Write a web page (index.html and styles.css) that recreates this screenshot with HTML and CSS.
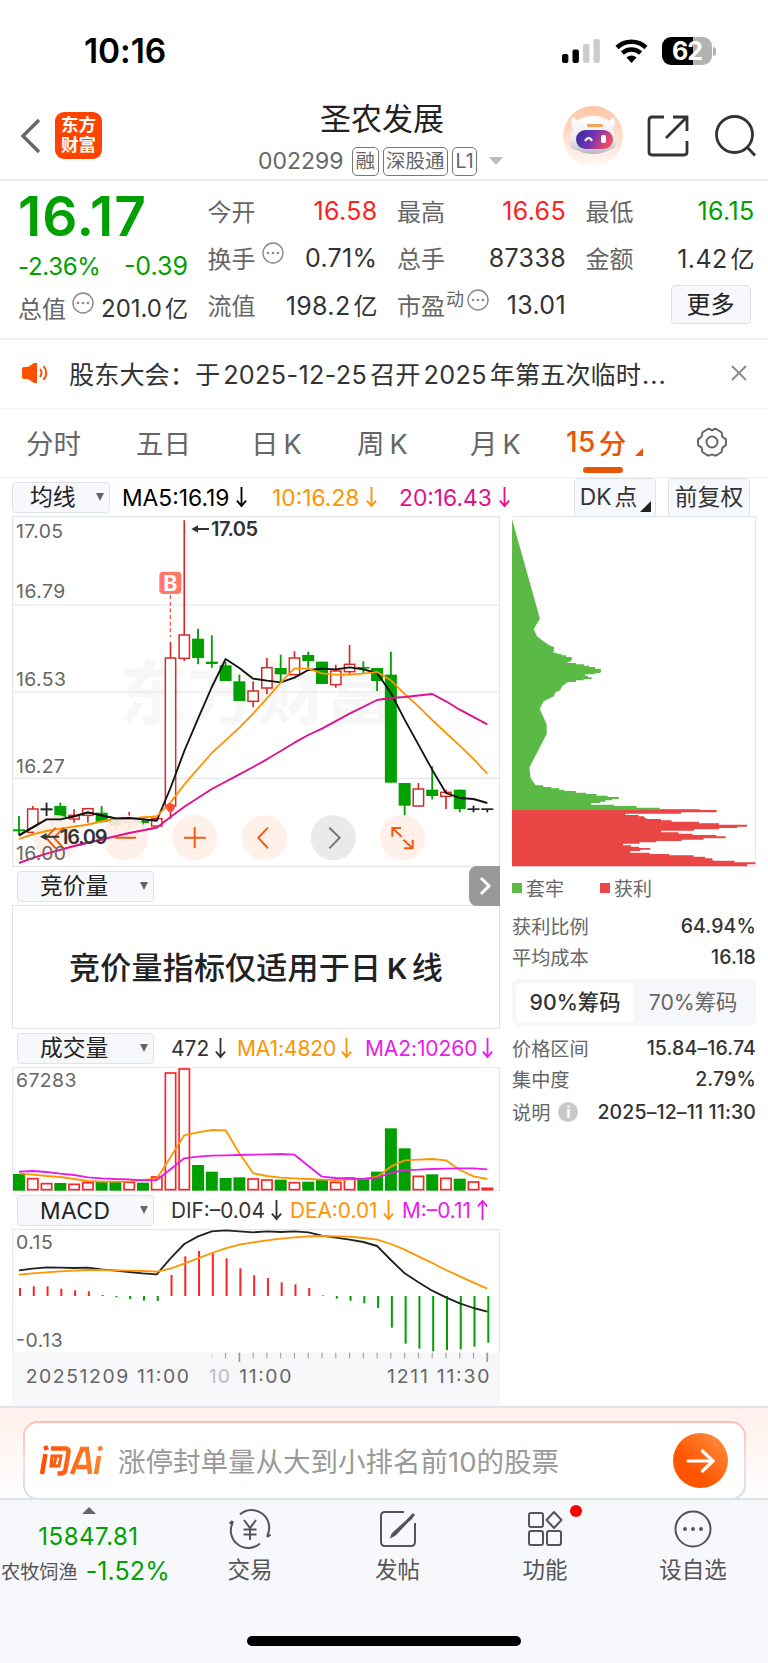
FILE: index.html
```html
<!DOCTYPE html>
<html lang="zh-CN">
<head>
<meta charset="utf-8">
<title>圣农发展 002299</title>
<link rel="stylesheet" href="styles.css">
</head>
<body>
<div class="phone">
  <div class="status">
    <span class="clock">10:16</span>
    <svg class="signal" width="38" height="24" viewBox="0 0 38 24"><rect x="0" y="15" width="6.4" height="9" rx="2"/><rect x="10.5" y="10.500" width="6.400" height="13.500" rx="2"/><g fill="#ccc"><rect x="21" y="5" width="6.400" height="19" rx="2"/><rect x="31.500" y="0" width="6.400" height="24" rx="2"/></g></svg>
    <svg class="wifi" width="33" height="24" viewBox="0 0 33 24"><path d="M16.500 24l-5-5.500a7.500 7.500 0 0 1 10 0z"/><path d="M2 8.500a21 21 0 0 1 29 0M7.300 14a13.500 13.500 0 0 1 18.400 0" fill="none" stroke="#000" stroke-width="4.500"/></svg>
    <div class="battery"><span>62</span></div><i class="nub"></i>
  </div>

  <header class="header">
    <svg class="back" width="22" height="36" viewBox="0 0 22 36"><path d="M19 2L3 18l16 16" fill="none" stroke="#666" stroke-width="3.400"/></svg>
    <div class="logo">东方<br>财富</div>
    <div class="title">
      <div class="name">圣农发展</div>
      <div class="code"><span>002299</span><b>融</b><b>深股通</b><b>L1</b><i></i></div>
    </div>
    <svg class="robot" width="60" height="60" viewBox="0 0 60 60">
      <defs><linearGradient id="ra" x1="0" y1="0" x2="0" y2="1"><stop offset="0" stop-color="#ffc5a6"/><stop offset="1" stop-color="#fff8f4"/></linearGradient>
      <linearGradient id="rb" x1="0" y1="0" x2="1" y2="0.300"><stop offset="0" stop-color="#2d2b9d"/><stop offset=".5" stop-color="#6d33b5"/><stop offset="1" stop-color="#f04a68"/></linearGradient>
      <linearGradient id="rc" x1="0" y1="0" x2="0" y2="1"><stop offset="0" stop-color="#fff"/><stop offset=".6" stop-color="#ececf0"/><stop offset="1" stop-color="#b9b9c4"/></linearGradient></defs>
      <circle cx="30" cy="30" r="30" fill="url(#ra)"/>
      <path d="M9 11q3 1 5 4 6-5 16-5t16 5q2-3 5-4 2 7-1 12 2 4 2 8 3 5 0 10-3 3-6 3-6 4-16 4t-16-4q-4 0-6-3-3-5 0-10 0-4 2-8-3-5-1-12z" fill="url(#rc)"/>
      <rect x="13" y="24" width="37" height="19" rx="9.500" fill="url(#rb)"/><path d="M22 35q4-6 7 0" fill="none" stroke="#fff" stroke-width="2.200"/><rect x="38" y="29" width="5" height="8" rx="2" fill="#fff"/><rect x="24" y="18" width="16" height="3" rx="1" fill="#f6a455"/>
    </svg>
    <svg class="share" width="42" height="42" viewBox="0 0 42 42" fill="none" stroke="#333" stroke-width="2.800"><path d="M17 2H5Q2 2 2 5v32q0 3 3 3h32q3 0 3-3V26M26 2h14v14M40 2L19 23"/></svg>
    <svg class="search" width="42" height="42" viewBox="0 0 42 42" fill="none" stroke="#333" stroke-width="2.800"><circle cx="19.500" cy="19.500" r="18"/><path d="M32 32l8 8.500"/></svg>
  </header>

  <section class="quote">
    <div class="price">
      <div class="last">16.17</div>
      <div class="chg"><span>-2.36%</span><span>-0.39</span></div>
      <div class="cap"><label>总值</label><svg class="dots" viewBox="0 0 22 22"><use href="#dots"/></svg><span>201.0<u>亿</u></span></div>
    </div>
    <div class="cell"><label>今开</label><span class="up">16.58</span></div>
    <div class="cell"><label>最高</label><span class="up">16.65</span></div>
    <div class="cell"><label>最低</label><span class="down">16.15</span></div>
    <div class="cell"><label>换手</label><svg class="dots" viewBox="0 0 22 22"><g id="dots"><circle cx="11" cy="11" r="10" fill="none" stroke="#888" stroke-width="1.400"/><g fill="#888"><circle cx="6" cy="11" r="1.300"/><circle cx="11" cy="11" r="1.300"/><circle cx="16" cy="11" r="1.300"/></g></g></svg><span>0.71%</span></div>
    <div class="cell"><label>总手</label><span>87338</span></div>
    <div class="cell"><label>金额</label><span>1.42<u>亿</u></span></div>
    <div class="cell"><label>流值</label><span>198.2<u>亿</u></span></div>
    <div class="cell"><label>市盈<sup>动</sup></label><svg class="dots pe" viewBox="0 0 22 22"><use href="#dots"/></svg><span>13.01</span></div>
    <div class="cell"><button class="more">更多</button></div>
  </section>

  <div class="notice">
    <svg width="26" height="20" viewBox="0 0 26 20"><path d="M0 6q0-2 2-2h4l6-4h3v20h-3l-6-4H2q-2 0-2-2z" fill="#ff5000"/><path d="M18 6q3 4 0 8M21.500 3q5.500 7 0 14" fill="none" stroke="#ff5000" stroke-width="2"/></svg>
    <span class="ntext">股东大会：于<u>2025-12-25</u>召开<u>2025</u>年第五次临时<em>...</em></span>
    <svg class="close" width="16" height="16" viewBox="0 0 16 16"><path d="M1 1l14 14M15 1L1 15" stroke="#888" stroke-width="1.800"/></svg>
  </div>

  <nav class="tabs">
    <span>分时</span><span>五日</span><span>日<u>K</u></span><span>周<u>K</u></span><span>月<u>K</u></span><span class="active"><u>15</u>分<i></i></span>
    <svg width="32" height="32" viewBox="0 0 32 32" fill="none" stroke="#666" stroke-width="2"><path d="M11 3.500q2-1.500 3.500 0t3 0 3.500 0l4 2.500q1.300 1 1 3t2 3 2 2v4q0 1.500-2 2.500t-2 3-1 3l-4 2.500q-2 1-3.500 0t-3 0-3.500 0l-4-2.500q-1.300-1-1-3t-2-3-2-2.500v-4q0-1 2-2t2-3 1-3z"/><circle cx="16" cy="16" r="5.500"/></svg>
  </nav>

  <div class="marow">
    <div class="sel s1">均线<i></i></div>
    <span class="m1">MA5:16.19<svg class="arr" viewBox="0 0 12 24"><path id="dn" d="M6 1v20M1 16l5 6 5-6"/></svg></span>
    <span class="m2">10:16.28<svg class="arr" viewBox="0 0 12 24"><use href="#dn"/></svg></span>
    <span class="m3">20:16.43<svg class="arr" viewBox="0 0 12 24"><use href="#dn"/></svg></span>
    <div class="chip dk">DK<u>点</u><i></i></div><div class="chip">前复权</div>
  </div>

  <main class="main">
    <div class="left">
      <svg id="kline" class="chart k" width="488" height="351" viewBox="36 17 1464 1053"></svg>
      <div class="sub"><div class="sel">竞价量<i></i></div><div class="side"><svg width="12" height="20" viewBox="0 0 12 20"><path d="M2 2l8 8-8 8" fill="none" stroke="#fff" stroke-width="3"/></svg></div></div>
      <div class="empty">竞价量指标仅适用于日<u>K</u>线</div>
      <div class="sub vol"><div class="sel">成交量<i></i></div>
        <span class="v1">472<svg class="arr" viewBox="0 0 12 24"><use href="#dn"/></svg></span><span class="v2">MA1:4820<svg class="arr" viewBox="0 0 12 24"><use href="#dn"/></svg></span><span class="v3">MA2:10260<svg class="arr" viewBox="0 0 12 24"><use href="#dn"/></svg></span></div>
      <svg id="volume" class="chart" width="488" height="124" viewBox="36 111 1464 372"></svg>
      <div class="sub macd"><div class="sel latin">MACD<i></i></div>
        <span class="d1">DIF:–0.04<svg class="arr" viewBox="0 0 12 24"><use href="#dn"/></svg></span><span class="d2">DEA:0.01<svg class="arr" viewBox="0 0 12 24"><use href="#dn"/></svg></span><span class="d3">M:–0.11<svg class="arr" viewBox="0 0 12 24"><path d="M6 23V3M1 8l5-6 5 6"/></svg></span></div>
      <svg id="macd" class="chart" width="488" height="177" viewBox="36 117 1464 531"></svg>
    </div>
    <aside class="right">
      <svg class="chart" width="244" height="351" viewBox="36 17 732 1053">
        <path d="M36 19H767V1068H36" fill="none" stroke="#dfe3ec" stroke-width="3"/>
        <path fill="#5bba45" d="M36 27L120 325 101 356 111 378 130 393 148 405 163 411 160 427H172V431H184V435H199V440H214L217 447 209 455H203V458H228V462H252V466H267V470H285V475H302L304 482 300 488H284V492H256V496H264V501H275V506H251V510H228V515H204L188 526 180 540 165 547 162 558 131 573 119 596 140 642V671L88 772 92 803 107 825H130V830H154V834H178V838H193V842H227V847H258V851H290V856H323V860H357V866H337V870H316V874H301V878H274V883H342V887H410V892H479V896H599V900H36z"/>
        <path fill="#eb4646" d="M36 899H650V906H543V910H376V914H416V918H432V922H439V926H483V930H515V934H597V939H657V943H741V949H712V953H657V957H582V961H483V966H536V970H578V974H649V978H677V984H611V988H545V992H469V996H419V1000H369V1005H393V1009H417V1013H451V1018H421V1022H391V1027H449V1031H508V1035H581V1039H615V1044H636L639 1051H704V1056H766V1062H742V1068H36z"/>
      </svg>
      <div class="legend"><i class="g"></i>套牢<i class="r"></i>获利</div>
      <div class="row"><label>获利比例</label><span>64.94%</span></div>
      <div class="row"><label>平均成本</label><span>16.18</span></div>
      <div class="seg"><b>90%筹码</b><span>70%筹码</span></div>
      <div class="row"><label>价格区间</label><span>15.84–16.74</span></div>
      <div class="row"><label>集中度</label><span>2.79%</span></div>
      <div class="row last-row"><label>说明<em>i</em></label><span>2025–12–11 11:30</span></div>
    </aside>
  </main>

  <div class="ai">
    <div class="box">
      <div class="ailogo"><svg width="66" height="34" viewBox="0 0 66 34">
        <defs><linearGradient id="ag" gradientUnits="userSpaceOnUse" x1="0" y1="0" x2="66" y2="0"><stop offset="0" stop-color="#ff4d00"/><stop offset="1" stop-color="#ff8430"/></linearGradient></defs>
        <g fill="none" stroke="url(#ag)" stroke-width="4.500"><path d="M6.500 11L3 31M12 5.500h15q3 0 2.500 4l-3 17q-.8 4-5 4h-3M33 31L43 6h5l3 25M38 24h12M60 13l-3 18"/><path d="M6 3l2 4M60.500 3.500l1.500 4"/><path d="M13 13h9l-2 10h-8zM17 14l-2 8" stroke-width="3"/></g></svg></div>
      <span>涨停封单量从大到小排名前10的股票</span>
      <svg class="go" width="55" height="55" viewBox="0 0 55 55"><defs><linearGradient id="og" x1="0" y1="1" x2="1" y2="0"><stop offset=".35" stop-color="#ff5500"/><stop offset="1" stop-color="#ff9548"/></linearGradient></defs><circle cx="27.500" cy="27.500" r="27.500" fill="url(#og)"/><path d="M15 28h24M29.500 18l10.500 10-10.500 10" fill="none" stroke="#fff" stroke-width="3.200" stroke-linecap="round"/></svg>
    </div>
  </div>

  <footer class="bottom">
    <div class="index"><i></i><b>15847.81</b><p><span>农牧饲渔</span><em>-1.52%</em></p></div>
    <div class="item"><svg width="44" height="40" viewBox="0 0 44 40" fill="none" stroke="#555" stroke-width="2"><path d="M12 5.500A17.500 17.500 0 0 1 39.500 26v2M39.500 28l3-2.500M32 34.500A17.500 17.500 0 0 1 4.500 14v-2M4.500 12l-3 2.500M16 11l6 8 6-8M22 19v12M15.500 20.500h13M15.500 25.500h13"/></svg><span>交易</span></div>
    <div class="item"><svg width="44" height="40" viewBox="0 0 44 40" fill="none" stroke="#555" stroke-width="2"><path d="M28 3H9Q5 3 5 7v26q0 4 4 4h26q4 0 4-4V14"/><path d="M36 8L17 25l-.500 1.500L19 25 38 5" stroke-width="3"/></svg><span>发帖</span></div>
    <div class="item"><svg width="44" height="40" viewBox="0 0 44 40" fill="none" stroke="#555" stroke-width="2"><rect x="6" y="4" width="14" height="14" rx="2"/><path d="M31 3l7.500 8-7.500 8-7.500-8z" stroke-linejoin="round"/><rect x="6" y="22" width="14" height="14" rx="2"/><rect x="24" y="22" width="14" height="14" rx="2"/></svg><u class="dot"></u><span>功能</span></div>
    <div class="item"><svg width="44" height="40" viewBox="0 0 44 40" fill="none" stroke="#555" stroke-width="2"><circle cx="22" cy="20" r="17.500"/><g fill="#555" stroke="none"><circle cx="14" cy="20" r="2"/><circle cx="22" cy="20" r="2"/><circle cx="30" cy="20" r="2"/></g></svg><span>设自选</span></div>
    <div class="home"></div>
  </footer>
</div>
<script src="charts.js"></script>
</body>
</html>
```
FILE: styles.css
```css
* { box-sizing: border-box; }
body { margin: 0; background: #fff; font-family: Inter, "Noto Sans CJK SC", sans-serif; color: #333; }
svg { display: block; flex: none; }
u { text-decoration: none; }
i, em { font-style: normal; }
.phone { width: 768px; height: 1663px; overflow: hidden; display: flex; flex-direction: column; }
.phone > * { flex: none; }

.status { height: 102px; display: flex; align-items: center; padding-left: 84px; }
.clock { width: 478px; font-size: 33.500px; font-weight: 600; letter-spacing: -.1px; color: #000; line-height: 40px; }
.wifi { margin: 0 14px 0 15px; }
.battery { width: 50px; height: 28px; border-radius: 9px; background: linear-gradient(90deg, #000 62%, #b3b3b3 62%); color: #fff; font-size: 25px; font-weight: 700; line-height: 28px; text-align: center; letter-spacing: -1px; }
.nub { width: 3px; height: 9px; margin-left: 1px; border-radius: 0 4px 4px 0; background: #b3b3b3; }

.header { height: 79px; border-bottom: 2px solid #ececec; display: flex; align-items: flex-start; padding-left: 20px; }
.back { margin-top: 16px; }
.logo { width: 47px; height: 47px; margin: 10px 0 0 13px; padding-top: 3px; background: #ff4400; border-radius: 9px; color: #fff; font-size: 17.500px; font-weight: 700; line-height: 20px; text-align: center; }
.title { width: 307px; margin-left: 117px; padding-left: 39px; }
.name { margin-left: 62px; font-size: 31px; line-height: 34px; color: #222; white-space: nowrap; }
.code { display: flex; align-items: center; height: 30px; margin-top: 10px; font-size: 23px; color: #666; }
.code span { width: 94px; letter-spacing: 0; }
.code b { height: 29px; margin-right: 4px; padding: 0 2.500px; border: 1.500px solid #777; border-radius: 5px; font-size: 19.500px; font-weight: 400; line-height: 26px; white-space: nowrap; }
.code i { margin-left: 8px; border: 7px solid transparent; border-top: 8px solid #bbb; border-bottom: 0; }
.robot { margin: 4px 0 0 37px; }
.share { margin: 13px 0 0 24px; }
.search { margin: 13px 0 0 26px; }

.quote { height: 159px; padding: 6px 13px 0 18px; border-bottom: 2px solid #f2f2f2; display: grid; grid-template-columns: 170px 170px 169px 169px; grid-template-rows: 47px 47px 47px; column-gap: 19.500px; }
.price { grid-row: 1 / 4; display: flex; flex-direction: column; color: #00a000; }
.last { height: 55px; font-size: 55px; font-weight: 600; line-height: 58px; letter-spacing: .9px; }
.chg { height: 46px; display: flex; justify-content: space-between; align-items: center; font-size: 24px; padding-top: 2px; letter-spacing: -.3px; }
.chg span:last-child { font-size: 25px; letter-spacing: 0; }
.cell, .cap { display: flex; align-items: center; height: 47px; font-size: 25px; color: #333; white-space: nowrap; letter-spacing: .35px; }
.cell u, .cap u { margin-left: 3px; font-size: 24px; letter-spacing: 0; }
.cap { height: 38px; padding-top: 0; font-size: 24px; letter-spacing: 0; }
.cap u { font-size: 23px; }
.quote label { font-size: 24px; color: #666; letter-spacing: 0; }
.cell > span, .cap > span { margin-left: auto; }
.quote .up { color: #f22; } .quote .down { color: #00a000; }
.dots { width: 22px; height: 22px; margin: 0 0 9px 6px; }
.dots.pe { margin-left: 3px; }
sup { font-size: 18px; line-height: 0; vertical-align: 9px; margin-left: 1px; }
.more { width: 80px; height: 39px; margin: 0 4px 0 auto; border: 1.500px solid #dde0e8; border-radius: 4px; background: #f7f8fb; font: 24px/34px Inter, "Noto Sans CJK SC", sans-serif; color: #222; padding: 0; }

.notice { height: 69px; border-bottom: 1px solid #f0f0f0; display: flex; align-items: center; padding: 0 21px 3px 22px; font-size: 25.200px; }
.ntext { width: 640px; margin-left: 21px; white-space: nowrap; }
.ntext u { margin: 0 3px; letter-spacing: .35px; }
.ntext em { letter-spacing: 1px; margin-left: 1px; }
.close { margin-left: auto; }

.tabs { position: relative; height: 69px; border-bottom: 1px solid #f0f0f0; display: grid; grid-template-columns: 110px 115px 106px 113px 95px 131px 40px; align-items: center; padding: 0 0 3px 26px; font-size: 27.500px; color: #666; }
.tabs u { margin-left: 5px; font-size: 27px; }
.tabs .active { display: flex; align-items: center; position: relative; height: 66px; color: #ea5504; font-weight: 500; }
.tabs .active u { margin: 0 3px 0 1px; letter-spacing: .4px; font-size: 28px; }
.tabs .active i { margin: 20px 0 0 9px; border-left: 8px solid transparent; border-bottom: 8px solid #ea5504; }
.tabs .active::after { content: ""; position: absolute; left: 18px; bottom: 2px; width: 40px; height: 6px; border-radius: 3px; background: #ea5504; }

.marow { height: 38px; display: flex; align-items: center; padding-left: 12px; font-size: 22.800px; }
.marow > span, .sub > span { display: flex; align-items: center; white-space: nowrap; }
.arr { width: 11px; height: 22px; margin-left: 6px; fill: none; stroke: currentColor; stroke-width: 2; }
.sel { position: relative; width: 137px; height: 31px; padding-left: 22px; border: 1.500px solid #dfe2e9; border-radius: 4px; background: #f7f8fb; font-size: 22.800px; line-height: 27px; color: #222; }
.latin { font-size: 22.800px; letter-spacing: .4px; line-height: 29px; }
.sel i { position: absolute; right: 5px; top: 10px; border: 4.500px solid transparent; border-top: 8px solid #666; border-bottom: 0; }
.s1 { width: 98px; padding-left: 17px; }
.s1 + .m1 { width: 150px; margin-left: 12px; color: #000; } .m2 { width: 127px; color: #ff9500; } .m3 { width: 175px; color: #e0108c; }
.marow .arr { margin-left: 7px; }
.chip { position: relative; width: 82px; height: 39px; border: 1.500px solid #dfe2e9; border-radius: 4px; background: #f7f8fb; font-size: 22.800px; line-height: 35px; text-align: center; white-space: nowrap; }
.chip u { margin-left: 3px; }
.dk { margin-right: 12px; padding-right: 13px; }
.dk i { position: absolute; right: 4px; bottom: 4px; border-left: 11px solid transparent; border-bottom: 11px solid #222; }

.main { height: 890px; display: flex; padding-left: 12px; }
.left { width: 488px; }
.chart { font-family: Inter, "Noto Sans CJK SC", sans-serif; }
.sub { height: 38px; display: flex; align-items: center; padding-left: 5px; font-size: 21px; }
.side { align-self: flex-start; width: 31px; height: 40px; margin: -1px 0 0 auto; border-radius: 8px 0 0 8px; background: #999; display: flex; align-items: center; justify-content: center; position: relative; }
.empty { height: 124px; border: 1px solid #e1e4ea; font-size: 31px; font-weight: 500; line-height: 124px; text-align: center; color: #222; letter-spacing: .2px; white-space: nowrap; }
.empty u { font-size: 29px; font-weight: 600; margin: 0 4px 0 6px; }
.vol, .macd { height: 38px; }
.v1 { width: 66px; margin-left: 17px; } .v2 { width: 128px; color: #ff9500; } .v3 { color: #e81ce8; }
.v2, .v3 { letter-spacing: -.1px; }
.v2 .arr, .v3 .arr { margin-left: 5px; }
.d1 { width: 119px; margin-left: 17px; } .d2 { width: 112px; color: #ff9500; } .d3 { color: #e81ce8; }
.macd > span { font-size: 20.800px; }

.right { width: 244px; margin-left: 12px; }
.legend { height: 43px; display: flex; align-items: center; font-size: 19px; color: #666; padding-bottom: 2px; }
.legend i { width: 10px; height: 10px; margin-right: 4px; }
.legend .g { background: #5bba45; } .legend .r { background: #eb4646; margin-left: 36px; }
.row { height: 31px; display: flex; align-items: center; justify-content: space-between; font-size: 19.500px; font-weight: 500; white-space: nowrap; }
.row label { display: flex; align-items: center; font-size: 19.200px; font-weight: 400; color: #666; }
.row span { letter-spacing: .12px; }
.row em { width: 20px; height: 20px; margin-left: 8px; border-radius: 50%; background: #c8c8c8; color: #fff; font-size: 16px; font-weight: 700; line-height: 20px; text-align: center; }
.last-row { height: 36px; }
.seg { height: 47px; margin: 7px 0 6px; padding: 4px; border-radius: 8px; background: #f6f7fa; display: flex; font-size: 21.300px; line-height: 39px; text-align: center; white-space: nowrap; }
.seg b { width: 118px; border-radius: 6px; background: #fff; font-weight: 500; }
.seg span { width: 118px; color: #666; }

.ai { height: 92px; border-top: 2px solid #dfe2e8; background: linear-gradient(#fff0eb, #fff); padding: 13px 22px 0 23px; overflow: hidden; }
.box { height: 79px; border: 2px solid transparent; border-radius: 15px; background: linear-gradient(#fff, #fff) padding-box, linear-gradient(#ffbdb2, #ffd9d3 50%, #d9dcf3 90%) border-box; display: flex; align-items: center; padding: 0 0 1px 14px; font-size: 27.500px; color: #999; }
.box span { width: 568px; margin-left: 13px; white-space: nowrap; }
.ailogo { width: 66px; }
.box .go { margin-left: -13px; }

.bottom { height: 166px; border-top: 2px solid #dfe2e8; background: #f7f8fb; display: grid; grid-template-columns: 177px 148px 147px 148px 148px; grid-template-rows: 100px 66px; color: #555; }
.index { display: flex; flex-direction: column; align-items: center; padding-top: 7px; }
.index i { border: 7px solid transparent; border-bottom: 7px solid #666; border-top: 0; }
.index b { margin-top: 8px; font-size: 24px; font-weight: 400; line-height: 30px; color: #00a000; letter-spacing: .5px; }
.index p { align-self: flex-start; display: flex; align-items: center; height: 34px; margin: 2px 0 0 1px; font-size: 19.200px; white-space: nowrap; }
.index em { margin-left: 8px; font-size: 25px; color: #00a000; letter-spacing: .1px; }
.item { position: relative; display: flex; flex-direction: column; align-items: center; padding: 9px 2px 0 0; font-size: 22.500px; line-height: 32px; }
.item span { margin-top: 5px; }
.dot { position: absolute; left: 98px; top: 5px; width: 12px; height: 12px; border-radius: 50%; background: #f00; }
.home { grid-column: 1 / 6; justify-self: center; width: 274px; height: 10px; margin-top: 36px; border-radius: 5px; background: #000; }
```
FILE: charts.js
```js
// Chart space uses three units per CSS pixel; one candle every 41.32 units.
const X = i => 57 + 41.32 * i;
const RED = '#d42a2a', GREEN = '#00a000', BLACK = '#222';
const line = (ys, color) => {
  const pts = ys.map((y, i) => Array.isArray(y) ? `${X(y[0])},${y[1]}` : `${X(i)},${y}`).join(' ');
  return `<polyline points="${pts}" fill="none" stroke="${color}" stroke-width="5.5" stroke-linejoin="round"/>`;
};
const label = (x, y, t, w, extra = '') =>
  `<text x="${x - 2}" y="${y}" font-size="58" fill="#666" textLength="${w}" ${extra}>${t}</text>`;

// [colour, body top, body bottom, high, low]
const candles = [
  ['g',957,963,917,975],['r',896,966,887,975],['k',894,900,877,917],['g',887,927,877,937],['r',915,926,897,937],
  ['r',895,915,895,937],['g',907,935,887,937],['g',930,946,920,955],['r',924,936,905,955],['g',932,938,925,955],
  ['r',925,947,925,947],['r',443,887,395,925],['r',374,444,30,452],['g',385,443,355,462],['g',454,461,375,472],
  ['g',465,512,455,512],['g',513,572,493,572],['r',542,573,513,591],['r',472,533,443,551],['g',473,492,433,515],
  ['r',443,493,423,493],['g',434,452,424,472],['g',454,521,454,521],['r',482,523,463,532],['r',462,484,404,492],
  ['g',470,475,453,490],['g',473,512,473,542],['g',493,817,424,817],['g',818,886,818,915],['r',836,887,818,887],
  ['g',838,857,768,867],['r',846,858,838,896],['g',838,896,838,906],['k',894,899,886,906],['k',894,899,896,906]
];
const ma5 = [975,951,927,927,918,906,915,924,923,927,931,833,722,625,530,446,473,505,511,516,502,479,475,477,471,477,488,548,628,703,778,848,863,866,878];
const ma10 = [986,972,962,955,949,943,933,925,925,921,918,876,823,775,728,690,652,610,564,517,474,475,489,493,493,490,485,510,551,588,629,668,706,746,790];
const ma20 = [[0,1058],[1,1043],[2,1030],[4,1007],[8,968],[10,952],[11,920],[12,889],[14,836],[16,792],[17,770],[18,747],[19,722],[20,697],[21,674],[22,655],[24,610],[26,569],[27,563],[28,560],[30,551],[31,573],[32,598],[34,642]];

let k = '<g font-size="208" font-weight="700" fill="#f7f7f7"><text x="355" y="625">东</text><text x="560" y="625">方</text><text x="770" y="625">财</text><text x="975" y="625">富</text></g>';
k += '<path d="M38 19H1499V1068H38zM38 284H1499M38 545H1499M38 804H1499" fill="none" stroke="#e2e6ec" stroke-width="3.5"/>';
k += label(50,84,'17.05',141) + label(50,263,'16.79',148) + label(50,526,'16.53',150) + label(50,787,'16.27',146);
candles.forEach(([c, t, b, h, l], i) => {
  const x = X(i), col = c === 'r' ? RED : c === 'g' ? GREEN : BLACK;
  if (c === 'r') {
    k += `<path d="M${x} ${h}V${t}M${x} ${b}V${l}" stroke="${col}" stroke-width="5"/><rect x="${x - 15.5}" y="${t}" width="31" height="${b - t}" fill="#fff" fill-opacity=".6" stroke="${col}" stroke-width="4.5"/>`;
  } else {
    k += `<path d="M${x} ${h}V${l}" stroke="${col}" stroke-width="5.5"/><rect x="${x - 18}" y="${t}" width="36" height="${b - t}" fill="${col}"/>`;
  }
});
k += line(ma5, '#111') + line(ma10, '#ff9500') + line(ma20, '#e0108c');
k += '<path d="M511 254V380" stroke="#ff5a45" stroke-width="4" stroke-dasharray="12 8"/><rect x="478" y="184" width="66" height="67" rx="12" fill="#ff7868"/><text x="511" y="241" font-size="64" font-weight="700" fill="#fff" text-anchor="middle">B</text>';
k += '<path d="M497 884q14-10 28 0q2 14-14 24q-16-10-14-24z" fill="#ff4d35"/>';
[[168,'#fff0e8'],[376,'#fff0e8'],[584,'#fff0e8'],[793,'#fff0e8'],[1000,'#e8e8e8'],[1207,'#fff0e8']].forEach(([x, f]) => { k += `<circle cx="${x}" cy="982" r="68" fill="${f}" fill-opacity=".9"/>`; });
k += line(ma10.slice(0, 11), '#ff9500') + line(ma20.slice(0, 6), '#e0108c') + line(ma5.slice(0, 11), '#111');
k += '<g fill="none" stroke="#f25a10" stroke-width="6"><path d="M167 952l-29 30 29 32M191 952l-29 30 29 32M344 982h64M552 982h65M584 950v64M804 952l-29 30 29 32M1177 979v-26h26M1177 953l28 26M1238 988v26h-26M1238 1014l-28-26"/><path d="M988 952l31 30-31 32" stroke="#777"/></g>';
k += '<g fill="#333" font-size="60" font-weight="600"><path d="M574 56l20-11v8h33v6h-33v8z"/><text x="633" y="77" textLength="141">17.05</text><path d="M120 979l20-11v8h38v6h-38v8z"/><text x="180" y="1000" textLength="143">16.09</text></g>';
k += label(50,1048,'16.00',150);
document.getElementById('kline').innerHTML = k;

const vol = 'g432 r444 r459 g459 r461 r456 g455 g455 r455 g458 r439 r127 r115 g405 g425 g444 g442 r445 r448 g449 r456 g455 g450 r455 r442 g447 g425 g295 g355 r437 g433 r443 g446 r454 r473'.split(' ');
let v = '<path d="M38 112H1499V482H38z" fill="none" stroke="#dfe3ea" stroke-width="3"/>' + label(50,171,'67283',181);
vol.forEach((s, i) => {
  const x = X(i), y = +s.slice(1);
  v += s[0] === 'g' ? `<rect x="${x - 18}" y="${y}" width="36" height="${482 - y}" fill="${GREEN}"/>`
    : `<rect x="${x - 15.5}" y="${y + 2}" width="31" height="${Math.max(2, 477 - y)}" fill="#fff" stroke="#f22" stroke-width="5"/>`;
});
v += line([430,434,438,441,447,453,455,455,454,450,446,382,316,307,300,301,370,430,438,443,445,447,449,450,448,447,440,410,391,389,387,391,420,439,447], '#ff9500');
v += line([425,423,426,431,435,442,445,447,448,451,450,418,385,380,377,376,375,374,373,372,374,407,440,444,446,447,443,429,420,419,417,416,415,415,418], '#e81ce8');
document.getElementById('volume').innerHTML = v;

const hist = [294,289,289,296,301,304,315,322,327,332,333,255,199,183,190,205,235,256,264,277,283,294,316,326,332,340,354,413,461,476,484,480,478,470,458];
let m = '<rect x="36" y="488" width="1464" height="160" fill="#f7f7fa"/><path d="M38 488V119H1499V488" fill="none" stroke="#dfe3ea" stroke-width="3"/>';
m += label(50,177,'0.15',110) + label(50,472,'-0.13',140);
hist.forEach((y, i) => { m += `<path d="M${X(i) + 3} 318V${y}" stroke="${y < 318 ? '#f22' : GREEN}" stroke-width="6"/>`; });
m += line([241,236,232,233,234,233,238,242,246,250,253,205,162,139,124,121,124,127,124,126,124,127,137,143,149,156,168,210,250,277,302,322,340,354,365], '#222');
m += line([254,250,247,244,242,240,240,241,242,243,245,236,221,205,189,175,164,157,151,146,142,139,138,139,140,144,149,162,179,199,219,240,259,278,296], '#ff9500');
for (let i = 14; i < 35; i++) {
  const major = i === 16 || i === 34;
  m += `<path d="M${X(i)} 488v${major ? 28 : 17}" stroke="${i === 14 ? '#ddd' : '#999'}" stroke-width="${major ? 5 : 3}"/>`;
}
m += label(79,579,'20251209 11:00',490) + label(628,579,'10',64,'opacity=".4"') + label(720,579,'11:00',156) + label(1163,579,'1211 11:30',307);
document.getElementById('macd').innerHTML = m;
```
